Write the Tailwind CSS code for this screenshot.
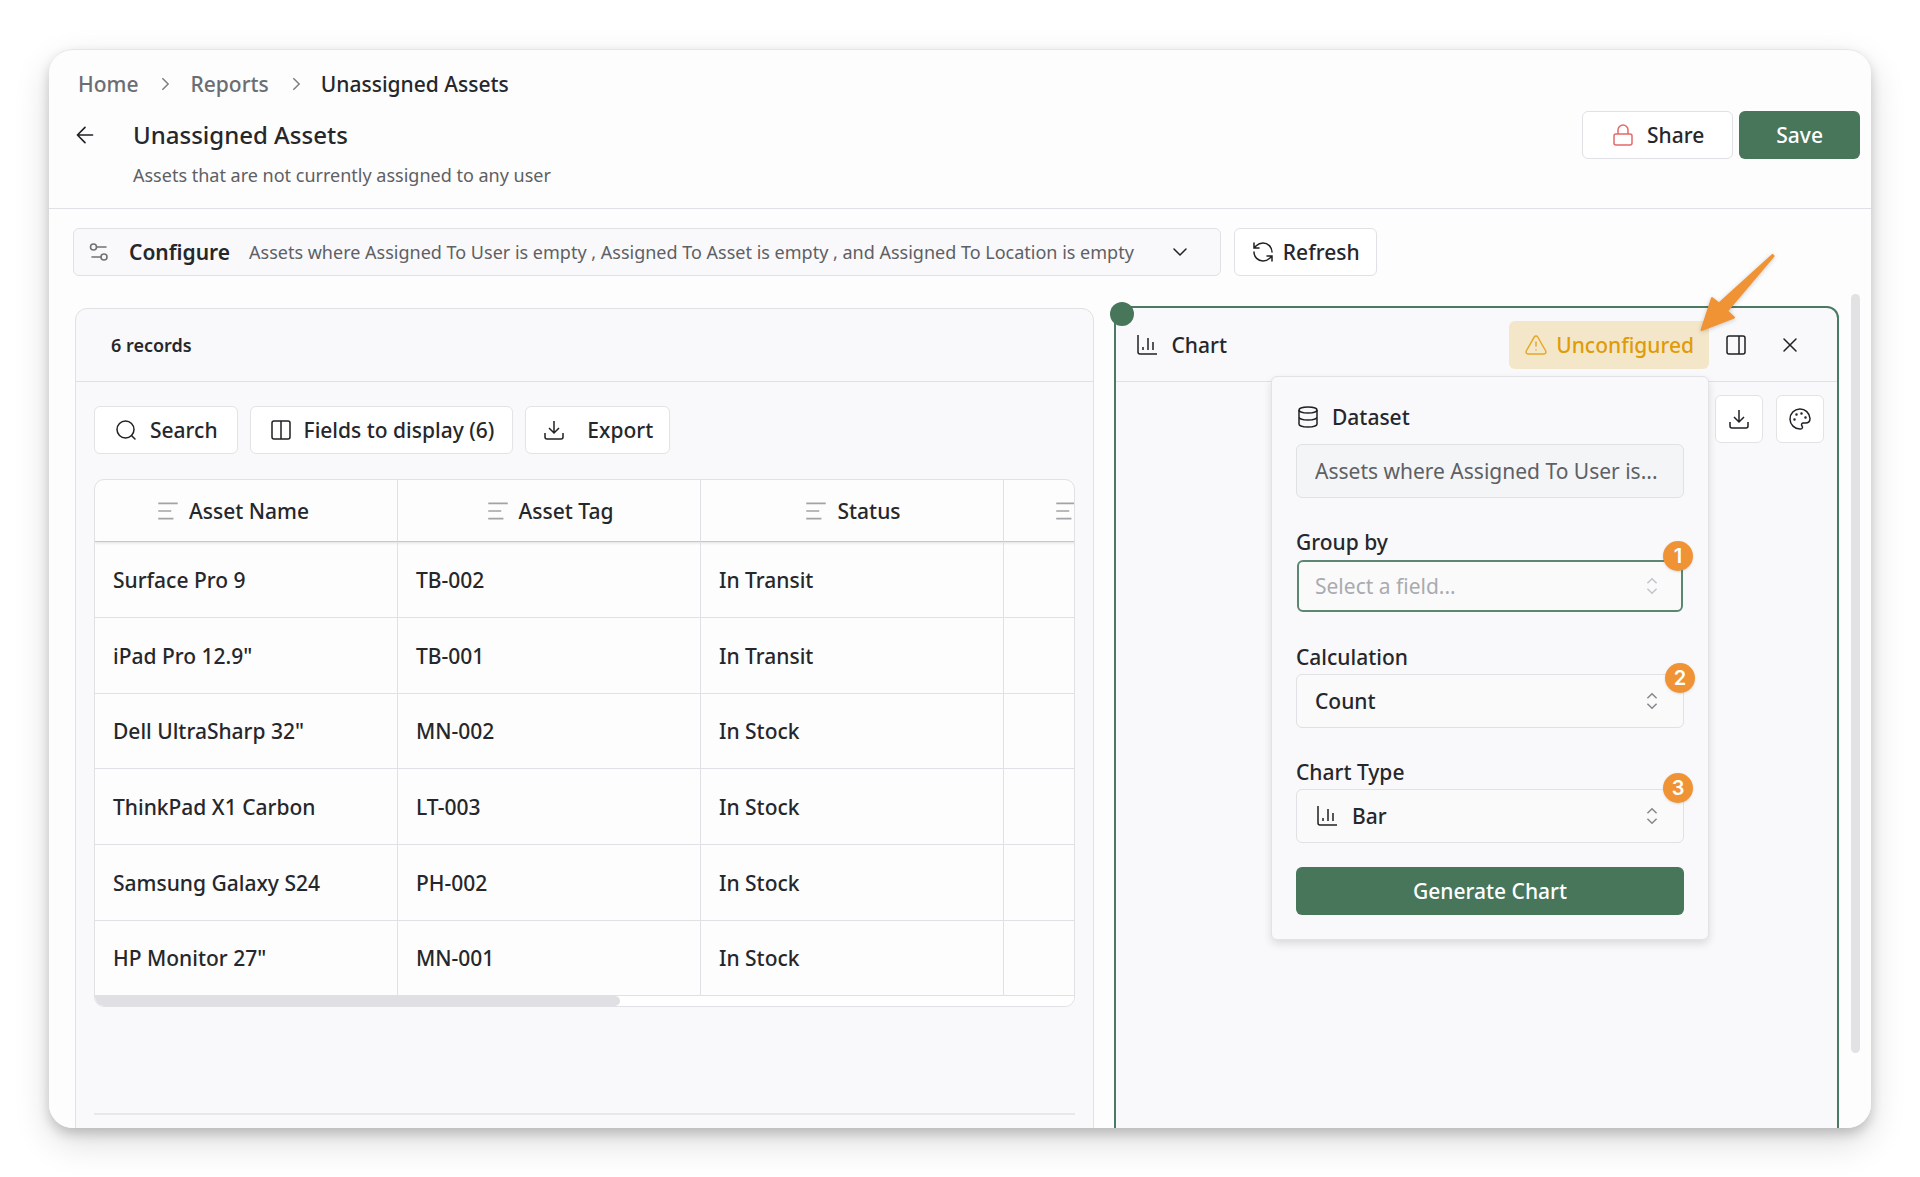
<!DOCTYPE html>
<html lang="en">
<head>
<meta charset="utf-8">
<title>Unassigned Assets</title>
<script src="https://cdn.jsdelivr.net/npm/@tailwindcss/browser@4"></script>
</head>
<body class="h-screen overflow-hidden bg-white p-[49px] font-['Noto_Sans',sans-serif] text-[21px] leading-[30px] font-medium text-[#26272b]">
<svg class="hidden" aria-hidden="true">
  <symbol id="download" viewBox="0 0 24 24"><path d="M3 15v4a2 2 0 0 0 2 2h14a2 2 0 0 0 2-2v-4M7 10l5 5 5-5M12 15V3"/></symbol>
  <symbol id="chart" viewBox="0 0 24 24"><path d="M3 2v17a2 2 0 0 0 2 2h17M18 17V9M13 17V5M8 17v-3"/></symbol>
  <symbol id="lines" viewBox="0 0 24 24"><path d="M3 5h18M3 12h12M3 19h14"/></symbol>
  <symbol id="updown" viewBox="0 0 24 24"><path d="m7 15 5 5 5-5M7 9l5-5 5 5"/></symbol>
  <symbol id="chevron-right" viewBox="0 0 24 24"><path d="m10 5 7 7-7 7"/></symbol>
</svg>

<div class="flex h-full flex-col rounded-3xl shadow-[0_6px_12px_rgba(0,0,0,0.18),0_14px_36px_rgba(0,0,0,0.14)]">
<div class="flex min-h-0 flex-1 flex-col overflow-hidden rounded-3xl border-t border-[#e6e6e8] bg-[#fdfdfd]">

  <header class="flex shrink-0 items-start border-b border-[#e0e1e4] pt-[19px] pr-[11px] pb-[19px]">
    <div class="flex-1">
      <nav aria-label="Breadcrumb" class="flex items-center gap-4 pl-[29px]">
        <a href="#" class="text-[#6b6d72]">Home</a>
        <svg class="size-5 fill-none stroke-[#7c7e83] stroke-[1.8]"><use href="#chevron-right"/></svg>
        <a href="#" class="text-[#6b6d72]">Reports</a>
        <svg class="size-5 fill-none stroke-[#7c7e83] stroke-[1.8]"><use href="#chevron-right"/></svg>
        <span aria-current="page">Unassigned Assets</span>
      </nav>
      <div class="mt-3 flex items-center gap-6 pl-3">
        <button type="button" aria-label="Back" class="flex size-12 items-center justify-center">
          <svg class="size-[26px] fill-none stroke-[#202124] stroke-[1.5]" viewBox="0 0 24 24"><path stroke-linecap="round" stroke-linejoin="round" d="M19 12H5M12 19l-7-7 7-7"/></svg>
        </button>
        <h1 class="text-2xl font-medium">Unassigned Assets</h1>
      </div>
      <p class="mt-0.5 pl-[84px] text-lg font-normal text-[#5e6064]">Assets that are not currently assigned to any user</p>
    </div>
    <div class="mt-[42px] flex gap-1.5">
      <button type="button" class="flex h-12 items-center gap-3 rounded-md border border-[#e0e1e4] bg-white px-7">
        <svg class="size-6 fill-none stroke-[#e5686b] stroke-[1.5]" viewBox="0 0 24 24"><rect x="3" y="11" width="18" height="11" rx="2"/><path d="M7 11V7a5 5 0 0 1 10 0v4"/></svg>
        Share
      </button>
      <button type="button" class="h-12 rounded-md bg-[#47765b] px-[37px] text-white">Save</button>
    </div>
  </header>

  <div class="flex shrink-0 gap-[13px] px-6 pt-[19px]">
    <button type="button" class="flex h-12 items-center rounded-md border border-[#e0e1e4] bg-[#f9f9fb] pr-7 pl-3 whitespace-nowrap">
      <svg class="size-[26px] fill-none stroke-[#6f7176] stroke-[1.6]" viewBox="0 0 26 26"><circle cx="7.5" cy="8" r="3"/><path stroke-linecap="round" d="M11 8h9M6 18h8.500"/><circle cx="18" cy="18" r="3"/></svg>
      <span class="ml-[17px] font-semibold">Configure</span>
      <span class="mr-[34px] ml-[19px] text-lg font-normal text-[#5e6064]">Assets where Assigned To User is empty , Assigned To Asset is empty , and Assigned To Location is empty</span>
      <svg class="size-6 fill-none stroke-[#202124] stroke-[1.5]" viewBox="0 0 24 24"><path stroke-linecap="round" stroke-linejoin="round" d="m6 9 6 6 6-6"/></svg>
    </button>
    <button type="button" class="flex h-12 items-center gap-2 rounded-md border border-[#e0e1e4] bg-white px-4">
      <svg class="size-6 fill-none stroke-[#202124] stroke-[1.5]" viewBox="0 0 24 24"><path stroke-linecap="round" d="M21 12a9 9 0 0 0-9-9 9.750 9.750 0 0 0-6.740 2.740L3 8M3 3v5h5M3 12a9 9 0 0 0 9 9 9.750 9.750 0 0 0 6.740-2.740L21 16M16 16h5v5"/></svg>
      Refresh
    </button>
  </div>

  <main class="mt-[18px] flex min-h-0 flex-1 pr-[11px] pl-[26px]">

    <section aria-label="Records" class="mt-3.5 mr-5 h-[1000px] min-w-0 flex-[1021] rounded-t-xl border border-[#e0e1e4] bg-[#f9f9fb]">
      <h2 class="flex h-[73px] items-center border-b border-[#e0e1e4] pl-[35px] text-lg font-semibold">6 records</h2>
      <div class="px-[18px] pt-6">
        <div class="flex gap-3">
          <button type="button" class="flex h-12 items-center gap-3 rounded-md border border-[#e3e3e6] bg-white px-[19px]">
            <svg class="size-6 fill-none stroke-[#202124] stroke-[1.5]" viewBox="0 0 24 24"><circle cx="11.500" cy="11.500" r="8.500"/><path stroke-linecap="round" d="m21 21-3.500-3.500"/></svg>
            Search
          </button>
          <button type="button" class="flex h-12 items-center gap-[11px] rounded-md border border-[#e3e3e6] bg-white px-[18px]">
            <svg class="size-6 fill-none stroke-[#202124] stroke-[1.5]" viewBox="0 0 24 24"><rect x="3" y="3" width="18" height="18" rx="2"/><path d="M12 3v18"/></svg>
            Fields to display (6)
          </button>
          <button type="button" class="flex h-12 items-center gap-[21px] rounded-md border border-[#e3e3e6] bg-white px-4">
            <svg class="size-6 fill-none stroke-[#202124] stroke-[1.5]"><use href="#download"/></svg>
            Export
          </button>
        </div>

        <div class="mt-[25px] overflow-hidden rounded-[10px] border border-[#e0e1e4] bg-[#fdfdfd]">
          <table class="w-[1212px] table-fixed border-separate border-spacing-0 text-left">
            <thead>
              <tr class="h-[62px] shadow-[0_1px_3px_rgba(0,0,0,0.12)]">
                <th scope="col" class="border-r border-b border-r-[#e0e1e4] border-b-[#c6c7ca] pr-7 font-medium"><div class="flex items-center justify-center gap-2"><svg class="size-[26px] fill-none stroke-[#a2a3a6] stroke-[1.5]"><use href="#lines"/></svg>Asset Name</div></th>
                <th scope="col" class="border-r border-b border-r-[#e0e1e4] border-b-[#c6c7ca] font-medium"><div class="flex items-center justify-center gap-2"><svg class="size-[26px] fill-none stroke-[#a2a3a6] stroke-[1.5]"><use href="#lines"/></svg>Asset Tag</div></th>
                <th scope="col" class="border-r border-b border-r-[#e0e1e4] border-b-[#c6c7ca] font-medium"><div class="flex items-center justify-center gap-2"><svg class="size-[26px] fill-none stroke-[#a2a3a6] stroke-[1.5]"><use href="#lines"/></svg>Status</div></th>
                <th scope="col" aria-label="More" class="border-b border-b-[#c6c7ca] pl-[49px]"><svg class="size-[26px] fill-none stroke-[#a2a3a6] stroke-[1.5]"><use href="#lines"/></svg></th>
              </tr>
            </thead>
            <tbody class="[&_td]:border-r [&_td]:border-b [&_td]:border-[#e0e1e4] [&_td]:pl-[18px] [&_tr]:h-[76px] [&_tr:nth-child(3n)]:h-[75px]">
              <tr><td>Surface Pro 9</td><td>TB-002</td><td>In Transit</td><td></td></tr>
              <tr><td>iPad Pro 12.9"</td><td>TB-001</td><td>In Transit</td><td></td></tr>
              <tr><td>Dell UltraSharp 32"</td><td>MN-002</td><td>In Stock</td><td></td></tr>
              <tr><td>ThinkPad X1 Carbon</td><td>LT-003</td><td>In Stock</td><td></td></tr>
              <tr><td>Samsung Galaxy S24</td><td>PH-002</td><td>In Stock</td><td></td></tr>
              <tr><td>HP Monitor 27"</td><td>MN-001</td><td>In Stock</td><td></td></tr>
            </tbody>
          </table>
          <div class="h-2.5 bg-white"><div class="h-full w-[53.6%] rounded-r-full bg-[#e0e0e4]"></div></div>
        </div>

        <div class="mt-[106px] border-t-2 border-[#e8e8ea]"></div>
      </div>
    </section>

    <section aria-label="Chart" class="relative mt-3 h-[1000px] min-w-0 flex-[723] rounded-tr-xl border-2 border-[#4a7a63] bg-[#f9f9fb]">
      <span class="absolute -top-[6px] -left-[6px] size-6 rounded-full bg-[#47765b]"></span>
      <div class="flex h-[74px] items-center border-b border-[#e0e1e4] pr-5 pl-[19px]">
        <svg class="size-6 fill-none stroke-[#202124] stroke-[1.5]"><use href="#chart"/></svg>
        <h2 class="ml-3 flex-1 font-medium">Chart</h2>
        <div class="relative">
          <button type="button" class="flex h-12 items-center gap-2 rounded-md bg-[#f4e7c9] px-[15px] text-[#e09c08]">
            <svg class="size-6 fill-none stroke-[#e3a928] stroke-[1.5]" viewBox="0 0 24 24"><path stroke-linecap="round" stroke-linejoin="round" d="m21.730 18-8-14a2 2 0 0 0-3.460 0l-8 14A2 2 0 0 0 4 21h16a2 2 0 0 0 1.730-3M12 9v4M12 17h.01"/></svg>
            Unconfigured
          </button>

          <svg class="absolute -top-[73px] -right-[71px] z-20 h-[90px] w-[85px] fill-[#f09335] stroke-[#f09335] stroke-2 drop-shadow-[0_1px_2px_rgba(0,0,0,0.2)]" viewBox="0 0 85 90"><path stroke-linejoin="round" d="M77.500 7 24 55.500 17 50 6.500 82 39 69.500 32 63 78.500 8Z"/></svg>

          <form class="absolute top-[55px] right-0 z-10 flex w-[438px] flex-col rounded-md border border-[#e2e3e6] bg-[#f9f9fb] p-6 shadow-[0_4px_8px_rgba(0,0,0,0.12)]">
            <label for="dataset" class="mb-2.5 flex h-[33px] items-center gap-3">
              <svg class="size-6 fill-none stroke-[#202124] stroke-[1.5]" viewBox="0 0 24 24"><ellipse cx="12" cy="5" rx="9" ry="3"/><path d="M3 5v14a9 3 0 0 0 18 0V5M3 12a9 3 0 0 0 18 0"/></svg>
              Dataset
            </label>
            <input id="dataset" type="text" readonly value="Assets where Assigned To User is..." class="h-[54px] rounded-md border border-[#dfe2e5] bg-[#f3f5f7] px-[18px] font-normal text-[#5e6064] outline-none">

            <label for="group" class="mt-7 flex h-[33px] items-center">Group by</label>
            <div class="relative p-px">
              <select id="group" class="block h-[52px] w-full appearance-none rounded-md border-2 border-[#5c8772] bg-[#fafafb] px-4 font-normal text-[#a9abaf] outline-none"><option>Select a field...</option></select>
              <svg class="pointer-events-none absolute top-4 right-[21px] size-[22px] fill-none stroke-[#c3c4c8] stroke-[1.6]"><use href="#updown"/></svg>
              <span class="absolute -top-[18px] -right-[9px] flex size-[30px] items-center justify-center rounded-full bg-[#f09335] font-[Inter,sans-serif] text-xl font-semibold text-white shadow-sm">1</span>
            </div>

            <label for="calc" class="mt-7 flex h-[33px] items-center">Calculation</label>
            <div class="relative">
              <select id="calc" class="block h-[54px] w-full appearance-none rounded-md border border-[#e0e1e4] bg-[#fafafb] px-[18px] outline-none"><option>Count</option></select>
              <svg class="pointer-events-none absolute top-4 right-[21px] size-[22px] fill-none stroke-[#85878b] stroke-[1.6]"><use href="#updown"/></svg>
              <span class="absolute -top-[11px] -right-[11px] flex size-[30px] items-center justify-center rounded-full bg-[#f09335] font-[Inter,sans-serif] text-xl font-semibold text-white shadow-sm">2</span>
            </div>

            <label for="type" class="mt-7 flex h-[33px] items-center">Chart Type</label>
            <div class="relative">
              <select id="type" class="block h-[54px] w-full appearance-none rounded-md border border-[#e0e1e4] bg-[#fafafb] pr-[18px] pl-[55px] outline-none"><option>Bar</option></select>
              <svg class="pointer-events-none absolute top-[15px] left-[19px] size-6 fill-none stroke-[#202124] stroke-[1.5]"><use href="#chart"/></svg>
              <svg class="pointer-events-none absolute top-4 right-[21px] size-[22px] fill-none stroke-[#85878b] stroke-[1.6]"><use href="#updown"/></svg>
              <span class="absolute -top-4 -right-[9px] flex size-[30px] items-center justify-center rounded-full bg-[#f09335] font-[Inter,sans-serif] text-xl font-semibold text-white shadow-sm">3</span>
            </div>

            <button type="button" class="mt-6 h-12 rounded-md bg-[#47765b] text-white">Generate Chart</button>
          </form>
        </div>
        <button type="button" aria-label="Toggle panel" class="flex h-12 w-[54px] items-center justify-center">
          <svg class="size-6 fill-none stroke-[#202124] stroke-[1.5]" viewBox="0 0 24 24"><rect x="3" y="3" width="18" height="18" rx="2"/><path d="M15 3v18"/></svg>
        </button>
        <button type="button" aria-label="Close" class="flex h-12 w-[54px] items-center justify-center">
          <svg class="size-6 fill-none stroke-[#202124] stroke-[1.5]" viewBox="0 0 24 24"><path stroke-linecap="round" d="M18 6 6 18M6 6l12 12"/></svg>
        </button>
      </div>
      <div class="flex justify-end gap-[13px] p-[13px]">
        <button type="button" aria-label="Download" class="flex size-12 items-center justify-center rounded-md border border-[#e3e3e6] bg-white">
          <svg class="size-6 fill-none stroke-[#202124] stroke-[1.5]"><use href="#download"/></svg>
        </button>
        <button type="button" aria-label="Colours" class="flex size-12 items-center justify-center rounded-md border border-[#e3e3e6] bg-white">
          <svg class="size-6 fill-none stroke-[#202124] stroke-[1.5]" viewBox="0 0 24 24"><path stroke-linejoin="round" d="M12 22a10 10 0 1 1 10-10.500c0 2.800-2 4.500-4.500 4.500h-2.250a1.750 1.750 0 0 0-1.400 2.800l.3.400a1.750 1.750 0 0 1-1.400 2.800Z"/><g class="fill-[#202124]"><circle cx="13.500" cy="6.500" r=".5"/><circle cx="17.500" cy="10.500" r=".5"/><circle cx="6.500" cy="12.500" r=".5"/><circle cx="8.500" cy="7.500" r=".5"/></g></svg>
        </button>
      </div>
    </section>

    <div class="ml-3 h-[91%] w-[9px] rounded-full bg-[#e2e2e5]"></div>
  </main>
</div>
</div>
</body>
</html>
